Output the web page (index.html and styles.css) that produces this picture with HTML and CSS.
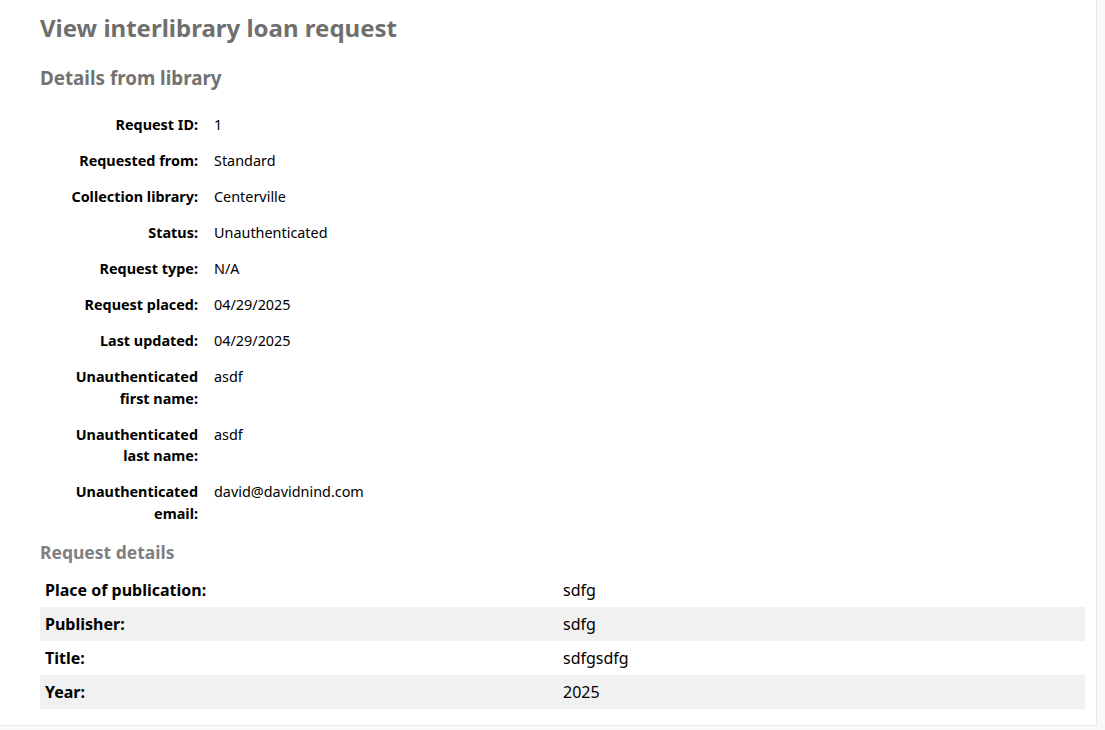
FILE: index.html
```html
<!DOCTYPE html>
<html lang="en">
<head>
    <meta charset="UTF-8">
    <meta name="viewport" content="width=device-width, initial-scale=1.0">
    <title>View interlibrary loan request</title>
    <link rel="stylesheet" href="styles.css">
</head>
<body>
    <div class="maincontent">
        <h1>View interlibrary loan request</h1>
        <h2>Details from library</h2>
        <ol class="details">
            <li><label>Request ID:</label><span>1</span></li>
            <li><label>Requested from:</label><span>Standard</span></li>
            <li><label>Collection library:</label><span>Centerville</span></li>
            <li><label>Status:</label><span>Unauthenticated</span></li>
            <li><label>Request type:</label><span>N/A</span></li>
            <li><label>Request placed:</label><span>04/29/2025</span></li>
            <li><label>Last updated:</label><span>04/29/2025</span></li>
            <li><label>Unauthenticated first name:</label><span>asdf</span></li>
            <li><label>Unauthenticated last name:</label><span>asdf</span></li>
            <li><label>Unauthenticated email:</label><span>david@davidnind.com</span></li>
        </ol>
        <h3>Request details</h3>
        <table class="request-details">
            <tbody>
                <tr><th>Place of publication:</th><td>sdfg</td></tr>
                <tr><th>Publisher:</th><td>sdfg</td></tr>
                <tr><th>Title:</th><td>sdfgsdfg</td></tr>
                <tr><th>Year:</th><td>2025</td></tr>
            </tbody>
        </table>
    </div>
</body>
</html>
```

FILE: styles.css
```css
body {
    font-family: "Noto Sans", "Open Sans", sans-serif;
    background-color: #f9f8fa;
    color: #000;
    margin: 0;
}
.maincontent {
    width: 1045px;
    background-color: #fff;
    border-right: 1px solid #e8e8ec;
    border-bottom: 1px solid #e8e8ec;
    padding: 12px 11px 16px 40px;
}
h1 {
    font-size: 24px;
    font-weight: 700;
    color: #6f6f6f;
    margin: 0 0 20px;
    line-height: 32px;
}
h2 {
    font-size: 18.8px;
    font-weight: 700;
    color: #727272;
    margin: 0 0 22px;
    line-height: 28px;
}
h3 {
    font-size: 17.5px;
    font-weight: 700;
    color: #808080;
    margin: 0 0 8px;
    line-height: 26px;
}
.details {
    list-style: none;
    margin: 0 0 1px;
    padding: 0;
    font-size: 14.4px;
    line-height: 1.5;
}
.details li {
    display: flex;
    margin-bottom: 1em;
}
.details label {
    width: 144px;
    flex-shrink: 0;
    text-align: right;
    font-weight: 700;
    margin-left: 14px;
    margin-right: 16px;
}
.request-details {
    width: 1045px;
    border-collapse: collapse;
    font-size: 16px;
}
.request-details th,
.request-details td {
    text-align: left;
    padding: 5px;
    height: 24px;
    font-weight: 400;
}
.request-details th {
    width: 508px;
    font-weight: 700;
}
.request-details tr:nth-child(even) {
    background-color: #f1f1f1;
}
```
